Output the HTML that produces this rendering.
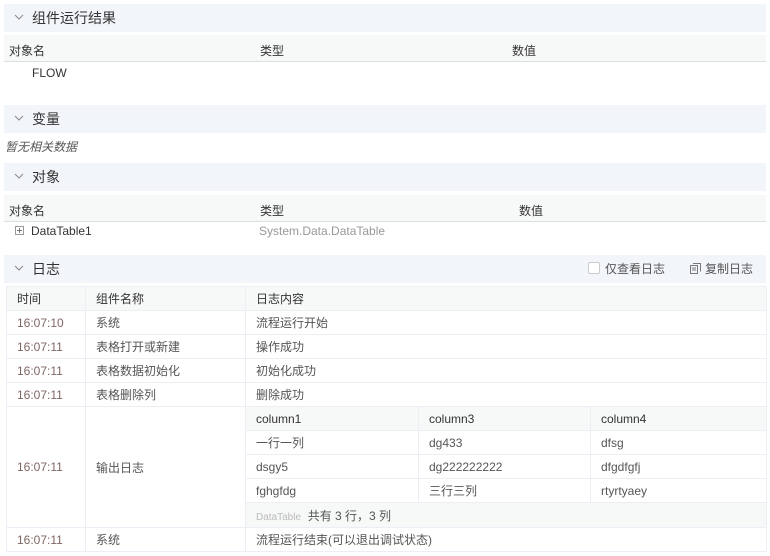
<!DOCTYPE html>
<html><head><meta charset="utf-8"><style>
*{box-sizing:border-box;margin:0;padding:0}
body{width:770px;height:556px;background:#fff;font-family:"Liberation Sans","Noto Sans CJK SC",sans-serif;font-size:12px;color:#333;position:relative;overflow:hidden}
.a{position:absolute;white-space:nowrap}
.sh{position:absolute;left:4px;width:762px;height:28px;background:#f2f5fa;font-size:14px;color:#333;line-height:28px;padding-left:28px}
.sh svg{position:absolute;left:10px;top:10px}
.th{position:absolute;left:4px;width:762px;height:27px;background:#f7f8f8;border-bottom:1px solid #dcdfe6}
table{position:absolute;border-collapse:collapse;table-layout:fixed}
td{border:1px solid #ebeef5;height:24px;padding:0 10px;color:#555;white-space:nowrap}
td.t{color:#7f6662}
tr.h td{background:#f7f8f8;color:#333}
</style></head><body>
<div class="sh" style="top:4px"><svg width="10" height="7" viewBox="0 0 10 7"><path d="M1 1l4 4 4-4" fill="none" stroke="#888" stroke-width="1"/></svg>组件运行结果</div>
<div class="th" style="top:35px"></div>
<div class="a" style="left:9px;top:42px">对象名</div>
<div class="a" style="left:260px;top:42px">类型</div>
<div class="a" style="left:512px;top:42px">数值</div>
<div class="a" style="left:32px;top:66px;color:#333">FLOW</div>

<div class="sh" style="top:105px"><svg width="10" height="7" viewBox="0 0 10 7"><path d="M1 1l4 4 4-4" fill="none" stroke="#888" stroke-width="1"/></svg>变量</div>
<div class="a" style="left:5px;top:138px;font-style:italic;color:#555">暂无相关数据</div>

<div class="sh" style="top:163px"><svg width="10" height="7" viewBox="0 0 10 7"><path d="M1 1l4 4 4-4" fill="none" stroke="#888" stroke-width="1"/></svg>对象</div>
<div class="th" style="top:195px"></div>
<div class="a" style="left:9px;top:202px">对象名</div>
<div class="a" style="left:260px;top:202px">类型</div>
<div class="a" style="left:519px;top:202px">数值</div>
<div class="a" style="left:15px;top:226px;width:9px;height:9px;border:1px solid #999"></div>
<div class="a" style="left:17px;top:230px;width:5px;height:1px;background:#777"></div>
<div class="a" style="left:19px;top:228px;width:1px;height:5px;background:#777"></div>
<div class="a" style="left:31px;top:224px;color:#333">DataTable1</div>
<div class="a" style="left:259px;top:224px;color:#999">System.Data.DataTable</div>

<div class="sh" style="top:255px"><svg width="10" height="7" viewBox="0 0 10 7"><path d="M1 1l4 4 4-4" fill="none" stroke="#888" stroke-width="1"/></svg>日志
<div class="a" style="left:584px;top:7px;width:12px;height:12px;border:1px solid #ccc;border-radius:2px;background:#fff"></div>
<div class="a" style="left:601px;top:0;font-size:12px;color:#555">仅查看日志</div>
<svg style="left:686px;top:8px" width="11" height="11" viewBox="0 0 11 11"><rect x="0.5" y="2.5" width="7" height="8" fill="none" stroke="#777"/><path d="M3 0.5h7.5v8" fill="none" stroke="#777"/><path d="M2 5h4M2 7h4" stroke="#777"/></svg>
<div class="a" style="left:701px;top:0;font-size:12px;color:#555">复制日志</div>
</div>

<table style="left:6px;top:286px;width:760px">
<colgroup><col style="width:79px"><col style="width:160px"><col style="width:173px"><col style="width:172px"><col style="width:176px"></colgroup>
<tr class="h"><td>时间</td><td>组件名称</td><td colspan="3">日志内容</td></tr>
<tr><td class="t">16:07:10</td><td>系统</td><td colspan="3">流程运行开始</td></tr>
<tr><td class="t">16:07:11</td><td>表格打开或新建</td><td colspan="3">操作成功</td></tr>
<tr><td class="t">16:07:11</td><td>表格数据初始化</td><td colspan="3">初始化成功</td></tr>
<tr><td class="t">16:07:11</td><td>表格删除列</td><td colspan="3">删除成功</td></tr>
<tr><td class="t" rowspan="5">16:07:11</td><td rowspan="5">输出日志</td><td style="background:#f7f8f8;color:#333">column1</td><td style="background:#f7f8f8;color:#333">column3</td><td style="background:#f7f8f8;color:#333">column4</td></tr>
<tr><td>一行一列</td><td>dg433</td><td>dfsg</td></tr>
<tr><td>dsgy5</td><td>dg222222222</td><td>dfgdfgfj</td></tr>
<tr><td>fghgfdg</td><td>三行三列</td><td>rtyrtyaey</td></tr>
<tr><td colspan="3" style="background:#f7f8f8;height:25px"><span style="font-size:10px;color:#bbb">DataTable</span>&nbsp; 共有 3 行，3 列</td></tr>
<tr><td class="t">16:07:11</td><td>系统</td><td colspan="3">流程运行结束(可以退出调试状态)</td></tr>
</table>
</body></html>
